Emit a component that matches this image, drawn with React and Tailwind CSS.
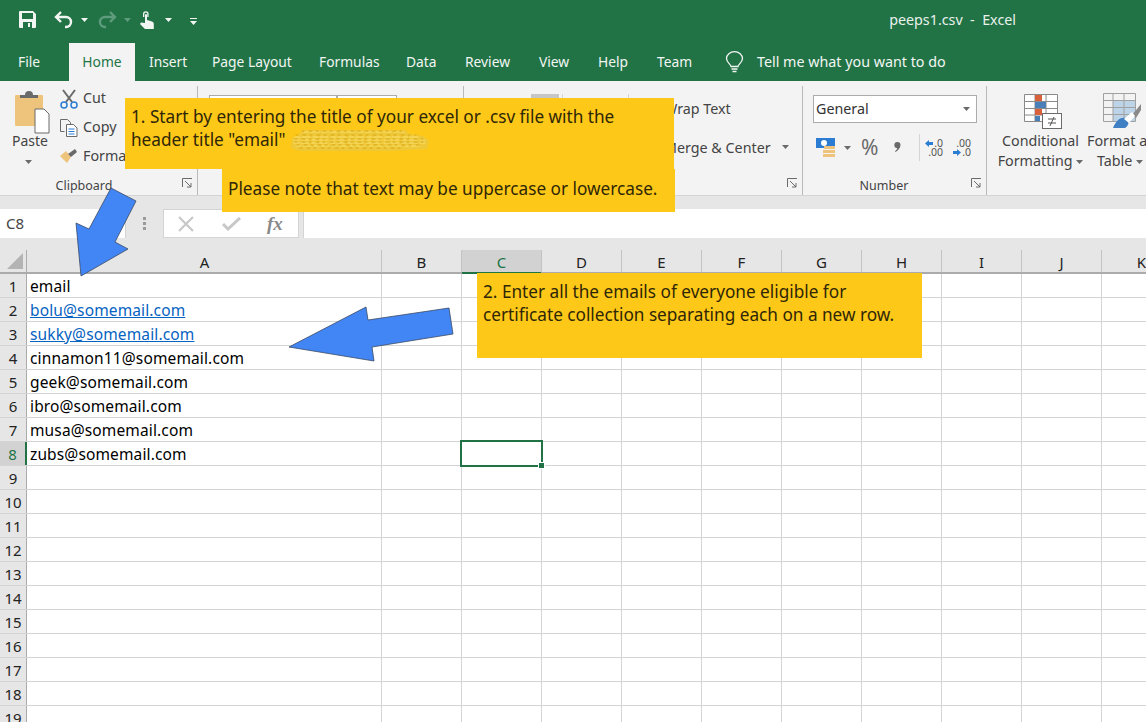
import React from "react";

const rows = ["email","bolu@somemail.com","sukky@somemail.com","cinnamon11@somemail.com","geek@somemail.com","ibro@somemail.com","musa@somemail.com","zubs@somemail.com"];
const cols = ["B","C","D","E","F","G","H","I","J","K"];
const tabs = [["Insert","w-[63px]"],["Page Layout","w-[107px]"],["Formulas","w-[87px]"],["Data","w-[59px]"],["Review","w-[74px]"],["View","w-[59px]"],["Help","w-[59px]"],["Team","w-[54px]"]];

function Launcher() {
  return (
    <svg width="11" height="11" viewBox="0 0 11 11" className="absolute right-[4px] bottom-[6px]" fill="none" stroke="#6a6a6a">
      <path d="M.5 9V.5H10M3 3l6 6M9 5v4H5" />
    </svg>
  );
}

function Caret({ c = "#6a6a6a" }) {
  return <svg width="7" height="4" viewBox="0 0 7 4" className="inline-block"><path d="M0 0h7L3.5 4z" fill={c} /></svg>;
}

function Group({ w, label, labelBox, children }) {
  return (
    <div className={`relative h-[109px] mt-[5px] border-r border-[#b9b9b9] shrink-0 ${w}`}>
      {children}
      {label && <div className={`absolute bottom-0 left-0 text-center text-[12.5px] leading-[18px] text-[#444] ${labelBox}`}>{label}</div>}
      <Launcher />
    </div>
  );
}

function TitleBar() {
  return (
    <div className="flex items-center h-10 bg-[#217346] text-white shrink-0">
      <svg width="17" height="17" viewBox="0 0 17 17" className="ml-[19px] mt-[-1px]">
        <path fillRule="evenodd" fill="#f2f6f3" d="M1 0h13l3 3v13a1 1 0 0 1-1 1H1a1 1 0 0 1-1-1V1a1 1 0 0 1 1-1zm2 2v6h11V2zM4 11v6h9v-6zm5 1h2v4H9z" />
      </svg>
      <svg width="20" height="18" viewBox="0 0 20 18" className="ml-[18px]" fill="none" stroke="#f2f6f3" strokeWidth="2.4">
        <path d="M7 1 2 6l5 5M2 6h10a5 5 0 0 1 5 5 5 5 0 0 1-5 5h-1" />
      </svg>
      <span className="ml-[7px] flex"><Caret c="#f2f6f3" /></span>
      <svg width="20" height="18" viewBox="0 0 20 18" className="ml-[9px]" fill="none" stroke="#5f9c7d" strokeWidth="2.4">
        <path d="m13 1 5 5-5 5M18 6H8a5 5 0 0 0-5 5 5 5 0 0 0 5 5h1" />
      </svg>
      <span className="ml-[7px] flex"><Caret c="#5f9c7d" /></span>
      <svg width="14" height="18" viewBox="0 0 14 18" className="ml-[9px]" fill="#f2f6f3">
        <path d="M3 6V3a2.8 2.8 0 0 1 5.600 0v3H7.300V3a1.500 1.500 0 0 0-3 0v3z" />
        <path d="M5 4a1 1 0 0 1 2 0v5l5 1.500c1.300.5 1.800 1.300 1.800 2.500v5H5l-5-5 1-1.500L5 12z" />
      </svg>
      <span className="ml-[11px] flex"><Caret c="#f2f6f3" /></span>
      <svg width="7" height="8" viewBox="0 0 7 8" className="ml-[18px] mt-[3px]" fill="#f2f6f3"><path d="M0 0h7v1H0zM0 3h7L3.500 7z" /></svg>
      <div className="ml-auto mr-[130px] text-[14.3px] text-[#e9f1ec] whitespace-pre">peeps1.csv  -  Excel</div>
    </div>
  );
}

function TabBar() {
  return (
    <div className="flex items-end h-[41px] bg-[#217346] text-[13.8px] text-[#f2f6f3] shrink-0">
      <div className="w-[69px] h-[38px] leading-[37px] pl-[18px]">File</div>
      <div className="w-[66px] h-[38px] leading-[37px] text-center bg-[#f3f3f3] text-[#217346]">Home</div>
      {tabs.map(([t, w]) => <div key={t} className={`h-[38px] leading-[37px] pl-[14px] whitespace-nowrap ${w}`}>{t}</div>)}
      <div className="h-[38px] flex items-center ml-[28px] mt-[-1px]">
        <svg width="19" height="22" viewBox="0 0 19 22" fill="none" stroke="#f2f6f3" strokeWidth="1.300">
          <path d="M6 15.500c0-2-4.500-4-4.500-8a8 6.800 0 0 1 16 0c0 4-4.500 6-4.500 8zM6.500 18h6M7.500 20.500h4" />
        </svg>
        <span className="ml-[13px] text-[14.3px]">Tell me what you want to do</span>
      </div>
    </div>
  );
}

function Ribbon() {
  return (
    <div className="flex h-[114px] bg-[#f3f3f3] text-[#444] text-[14.3px] shrink-0 overflow-hidden">
      <Group w="w-[198px]" label="Clipboard" labelBox="w-[168px]">
        <svg width="35" height="44" viewBox="0 0 35 44" className="absolute left-[15px] top-[4px]">
          <rect x="0" y="5" width="28" height="31" rx="1" fill="#eec47d" />
          <path d="M5 8V5h5a4 4 0 0 1 8 0h5v3z" fill="#6a6a6a" />
          <path d="M20 19h9l5 5v19H20z" fill="#fff" stroke="#6a6a6a" />
        </svg>
        <div className="absolute left-[12px] top-[45px] text-[14px] leading-5">Paste</div>
        <div className="absolute left-[25px] top-[74px] flex"><Caret /></div>
        <svg width="18" height="20" viewBox="0 0 18 20" className="absolute left-[60px] top-[3px]" fill="none">
          <path d="M3 1l9 12M15 1 6 13" stroke="#6a6a6a" strokeWidth="2" />
          <circle cx="4" cy="16" r="3" stroke="#2b7cd3" strokeWidth="1.500" />
          <circle cx="14" cy="16" r="3" stroke="#2b7cd3" strokeWidth="1.500" />
        </svg>
        <div className="absolute left-[83px] top-[2px] leading-5">Cut</div>
        <svg width="18" height="18" viewBox="0 0 18 18" className="absolute left-[60px] top-[33px]" fill="none" stroke="#6a6a6a">
          <path d="M.5.500h7l3 3V5M.5.500v12h4" />
          <path d="M6.500 5.500h7l3.500 3.500v8.500H6.500z" fill="#fff" />
          <path d="M8.500 10h6M8.500 12.500h6M8.500 15h6" stroke="#2b7cd3" />
        </svg>
        <div className="absolute left-[83px] top-[31px] leading-5">Copy</div>
        <svg width="18" height="16" viewBox="0 0 18 16" className="absolute left-[60px] top-[62px]">
          <path d="M0 8l6-5 5 6-4 6z" fill="#eec47d" />
          <path d="M8 6l7-5 2 3-6 5z" fill="#6a6a6a" />
        </svg>
        <div className="absolute left-[83px] top-[60px] leading-5">Format Painter</div>
      </Group>
      <Group w="w-[266px]">
        <div className="absolute left-[11px] top-[9px] w-[128px] h-[28px] border border-[#ababab] bg-white" />
        <div className="absolute left-[139px] top-[9px] w-[60px] h-[28px] border border-[#ababab] bg-white" />
      </Group>
      <div className="relative h-[109px] mt-[5px] w-[339px] border-r border-[#b9b9b9] shrink-0">
        <div className="absolute left-[67px] top-[8px] w-[28px] h-[10px] bg-[#c6c6c6]" />
        <div className="absolute left-[98px] top-[8px] w-px h-[80px] bg-[#d4d4d4]" />
        <div className="absolute left-[164px] top-[8px] w-px h-[80px] bg-[#d4d4d4]" />
        <div className="absolute left-[200px] top-[13px] leading-5 whitespace-nowrap">Wrap Text</div>
        <div className="absolute left-[200px] top-[52px] leading-5 whitespace-nowrap">Merge &amp; Center</div>
        <div className="absolute left-[318px] top-[59px] flex"><Caret /></div>
        <Launcher />
      </div>
      <Group w="w-[184px]" label="Number" labelBox="w-[162px]">
        <div className="absolute left-[10px] top-[9px] w-[164px] h-[28px] border border-[#ababab] bg-white text-[#333] leading-[25px] pl-[2px]">
          General
          <span className="absolute right-[6px] top-[11px] flex"><Caret /></span>
        </div>
        <svg width="20" height="20" viewBox="0 0 20 20" className="absolute left-[13px] top-[52px]">
          <rect x="0" y="0" width="19" height="10" fill="#2b7cd3" />
          <circle cx="8" cy="5" r="3" fill="#fff" />
          <rect x="8" y="8" width="11" height="3" fill="#eec47d" />
          <rect x="7" y="12" width="12" height="3" fill="#eec47d" />
          <rect x="7" y="16" width="12" height="3" fill="#eec47d" />
        </svg>
        <div className="absolute left-[41px] top-[60px] flex"><Caret /></div>
        <div className="absolute left-[58px] top-[47px] text-[21px] leading-7 text-[#6a6a6a]">%</div>
        <svg width="7" height="10" viewBox="0 0 7 10" className="absolute left-[91px] top-[56px]">
          <path d="M3.500 0a3 3 0 0 1 3 3c0 3-2.500 5.500-5 7l-.5-.7C2.300 8.200 3 7.300 3.200 6A3 3 0 0 1 3.500 0z" fill="#6a6a6a" />
        </svg>
        <div className="absolute left-[116px] top-[48px] w-px h-[27px] bg-[#d4d4d4]" />
        <div className="absolute left-[122px] top-[53px] w-[18px] flex flex-col items-end text-[10.5px] leading-[9px] text-[#555]">
          <div className="flex items-center gap-[1px]">
            <svg width="8" height="7" viewBox="0 0 8 7"><path d="M4 0 0 3.500 4 7V5h4V2H4z" fill="#2b7cd3" /></svg>
            <span>.0</span>
          </div>
          <div>.00</div>
        </div>
        <div className="absolute left-[150px] top-[53px] w-[18px] flex flex-col items-end text-[10.5px] leading-[9px] text-[#555]">
          <div>.00</div>
          <div className="flex items-center gap-[1px]">
            <svg width="8" height="7" viewBox="0 0 8 7"><path d="M4 0 8 3.500 4 7V5H0V2h4z" fill="#2b7cd3" /></svg>
            <span>.0</span>
          </div>
        </div>
      </Group>
      <div className="relative flex-1 h-[109px] mt-[5px]">
        <svg width="38" height="35" viewBox="0 0 38 35" className="absolute left-[37px] top-[8px]" fill="none">
          <path d="M.5.500h33v27H.5zM.5 7.500h33M.5 14.500h33M.5 21h33M11 .500v27M22 .500v27" stroke="#8a8a8a" fill="#fff" />
          <rect x="11" y="1" width="7" height="6" fill="#d9603c" />
          <rect x="11" y="8" width="11" height="6" fill="#4a7fb8" />
          <rect x="11" y="15" width="7" height="6" fill="#d9603c" />
          <rect x="11" y="22" width="5" height="5" fill="#4a7fb8" />
          <rect x="18.500" y="19.500" width="19" height="15" fill="#fff" stroke="#6a6a6a" />
          <path d="M24 25h8M24 29h8M30 23l-4 9" stroke="#555" />
        </svg>
        <div className="absolute left-0 w-[107px] top-[45px] text-center leading-5 whitespace-nowrap">Conditional</div>
        <div className="absolute left-0 w-[107px] top-[65px] text-center leading-5 whitespace-nowrap">Formatting <span className="inline-flex align-middle"><Caret /></span></div>
        <svg width="38" height="35" viewBox="0 0 38 35" className="absolute left-[116px] top-[7px]" fill="none">
          <rect x="10" y="8" width="23" height="20" fill="#bdd3e8" />
          <path d="M.5.500h32v28H.5zM.5 7.500h32M.5 14.500h32M.5 21.500h32M10 .500v28M21 .500v28" stroke="#a0a0a0" />
          <path d="M29 22l9-11v6l-5 8z" fill="#8a8a8a" />
          <path d="M10 35c3-8 8-11 13-10 4 1 3 8-1 10z" fill="#3f7fc4" />
          <path d="M21 26l8-7 3 4-6 7z" fill="#fff" />
        </svg>
        <div className="absolute left-[100px] top-[45px] leading-5 whitespace-nowrap">Format as</div>
        <div className="absolute left-[110px] top-[65px] leading-5 whitespace-nowrap">Table <span className="inline-flex align-middle"><Caret /></span></div>
      </div>
    </div>
  );
}

function FormulaBar() {
  return (
    <div className="shrink-0 bg-[#e6e6e6] pt-[13px] pb-[12px] border-t border-[#d4d4d4]">
      <div className="flex h-[29px] items-stretch">
        <div className="w-[126px] bg-white text-[15px] leading-[29px] pl-[6px] text-[#444] border-r border-[#d4d4d4]">C8</div>
        <div className="w-[37px] flex flex-col items-center justify-center gap-[2px]">
          <span className="w-[3px] h-[3px] bg-[#9a9a9a]" />
          <span className="w-[3px] h-[3px] bg-[#9a9a9a]" />
          <span className="w-[3px] h-[3px] bg-[#9a9a9a]" />
        </div>
        <div className="w-[136px] bg-white border border-[#d4d4d4] flex items-center">
          <svg width="16" height="16" viewBox="0 0 16 16" className="ml-[14px]" fill="none" stroke="#c8c8c8" strokeWidth="2.200"><path d="m1 1 14 14M15 1 1 15" /></svg>
          <svg width="19" height="14" viewBox="0 0 19 14" className="ml-[28px]" fill="none" stroke="#c8c8c8" strokeWidth="3"><path d="m1 7 5 5L18 1" /></svg>
          <span className="ml-[26px] text-[19px] font-bold italic text-[#8a8a8a] leading-none" style={{ fontFamily: "'Liberation Serif', serif" }}>fx</span>
        </div>
        <div className="w-[4px]" />
        <div className="flex-1 bg-white border-l border-[#d4d4d4]" />
      </div>
    </div>
  );
}

function Head() {
  return (
    <div className="flex h-[24px] shrink-0 bg-[#e6e6e6] border-b-2 border-[#ababab] text-[15px] text-[#222] leading-[24px]">
      <div className="relative w-[27px] shrink-0 border-r border-[#ababab]">
        <svg width="16" height="16" viewBox="0 0 16 16" className="absolute right-[3px] bottom-[3px]"><path d="M16 0v16H0z" fill="#b4b4b4" /></svg>
      </div>
      <div className="w-[355px] shrink-0 text-center pl-[1px] border-r border-[#c4c4c4]">A</div>
      {cols.map((c) => (
        <div key={c} className={`w-[80px] shrink-0 text-center border-r border-[#c4c4c4] ${c === "C" ? "bg-[#d2d2d2] text-[#217346] relative" : ""}`}>
          {c}
          {c === "C" && <span className="absolute left-0 right-0 bottom-[-2px] h-[2px] bg-[#217346]" />}
        </div>
      ))}
    </div>
  );
}

function Row({ n, text }) {
  const link = n === 2 || n === 3;
  const sel = n === 8;
  return (
    <div className="flex h-[24px] shrink-0 border-b border-[#d4d4d4] leading-[24px]">
      <div className={`w-[27px] shrink-0 text-center text-[15px] border-r ${sel ? "bg-[#d2d2d2] text-[#217346] border-r-2 border-[#217346]" : "bg-[#e6e6e6] text-[#222] border-[#ababab]"}`}>{n}</div>
      <div className={`w-[355px] shrink-0 pl-[3px] text-[15.5px] border-r border-[#d4d4d4] tracking-[0.13px] ${link ? "text-[#0563c1] underline" : "text-black"}`}>{text}</div>
      {cols.map((c) => <div key={c} className="w-[80px] shrink-0 border-r border-[#d4d4d4]" />)}
    </div>
  );
}

export default function App() {
  return (
    <div className="relative w-[1146px] h-[722px] overflow-hidden bg-white flex flex-col" style={{ fontFamily: "'Noto Sans', 'Open Sans', sans-serif" }}>
      <TitleBar />
      <TabBar />
      <Ribbon />
      <FormulaBar />
      <Head />
      {Array.from({ length: 19 }, (_, i) => <Row key={i} n={i + 1} text={rows[i] || ""} />)}

      {/* selected cell */}
      <div className="absolute left-[460px] top-[440px] w-[83px] h-[27px] border-2 border-[#217346]">
        <span className="absolute right-[-4px] bottom-[-4px] w-[5px] h-[5px] bg-[#217346] border border-white box-content" />
      </div>

      {/* callouts */}
      <div className="absolute left-[125px] top-[98px] w-[549px] h-[71px] bg-[#fec818] text-[17.2px] leading-[23px] text-[#2e2607] pl-[6px] pt-[7px]">
        <div className="whitespace-nowrap">1. Start by entering the title of your excel or .csv file with the</div>
        <div className="whitespace-nowrap">header title "email"</div>
        <svg width="140" height="24" viewBox="0 0 140 24" className="absolute left-[165px] top-[30px]" fill="none" strokeLinecap="round">
          <path d="M12 2H115L120 6 133 8 139 13 137 21 100 23H10L1 20 2 10 8 8z" fill="#efc839" />
          <path d="M14 4h100M5 9h125M4 12h131M4 15h132M6 18h126" stroke="#fadf6f" strokeWidth="1" strokeDasharray="5 2 8 3" />
          <path d="M12 3h100M6 7h120M5 11h128M5 14h130M7 17h124M10 20h100" stroke="#d6a715" strokeWidth="1" strokeDasharray="2 5 3 4" />
        </svg>
      </div>
      <div className="absolute left-[222px] top-[169px] w-[453px] h-[43px] bg-[#fec818] text-[17.2px] leading-[23px] text-[#2e2607] pl-[6px] pt-[8px] whitespace-nowrap">
        Please note that text may be uppercase or lowercase.
      </div>
      <div className="absolute left-[477px] top-[273px] w-[445px] h-[85px] bg-[#fec818] text-[17.2px] leading-[23px] text-[#2e2607] pl-[6px] pt-[7px]">
        <div className="whitespace-nowrap">2. Enter all the emails of everyone eligible for</div>
        <div className="whitespace-nowrap">certificate collection separating each on a new row.</div>
      </div>

      {/* arrows */}
      <svg width="1146" height="722" viewBox="0 0 1146 722" className="absolute inset-0 pointer-events-none">
        <path d="M81 276 128 249 115 242 136 201 111 188 89 229 76 223z" fill="#4285f4" stroke="#3b4a63" strokeWidth="0.800" />
        <path d="M289 347 366 307 368 320 449 308 453 334 372 347 374 361z" fill="#4285f4" stroke="#3b4a63" strokeWidth="0.800" />
      </svg>
    </div>
  );
}
